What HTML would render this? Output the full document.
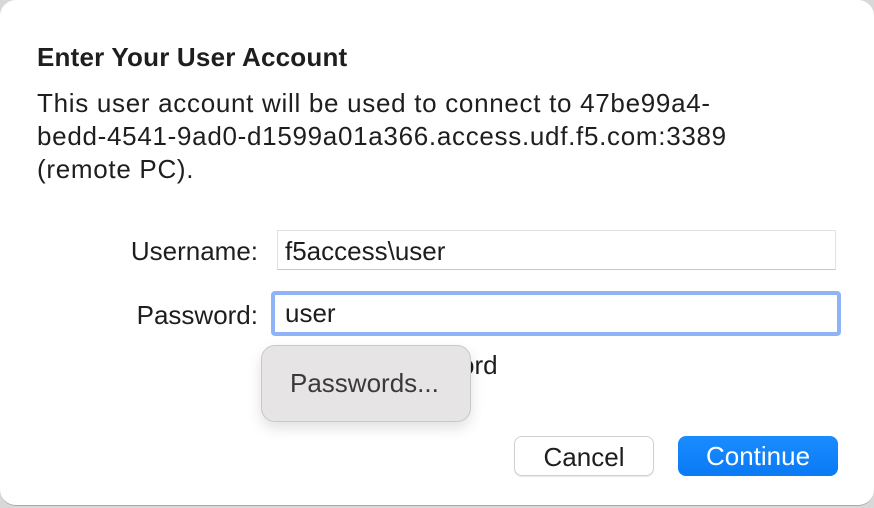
<!DOCTYPE html>
<html><head><style>
body{margin:0;width:874px;height:508px;background:#d8d8d8;position:relative;overflow:hidden;font-family:"Liberation Sans",sans-serif;color:#1e1e1e}
.dlg{position:absolute;left:0;top:0;width:874px;height:505px;background:#fff;border-radius:16px;border-bottom:1px solid #aaa}
.t{position:absolute;left:37px;top:41px;font-size:26px;font-weight:bold;letter-spacing:0.2px;line-height:32px}
.p{position:absolute;left:37px;top:87px;font-size:26px;line-height:33px;width:800px;letter-spacing:0.7px;white-space:nowrap}
.lbl{position:absolute;font-size:26px;text-align:right;width:200px;line-height:30px}
.f{position:absolute;background:#fff;font-size:26px;box-sizing:border-box;padding-left:7px}
.btn{position:absolute;top:436px;height:40px;border-radius:8px;font-size:26px;text-align:center;line-height:40px;box-sizing:border-box}
</style></head><body>
<div class="dlg">
<div class="t">Enter Your User Account</div>
<div class="p">This user account will be used to connect to 47be99a4-<br>bedd-4541-9ad0-d1599a01a366.access.udf.f5.com:3389<br>(remote PC).</div>
<div class="lbl" style="left:58px;top:236px">Username:</div>
<div class="f" style="left:277px;top:230px;width:559px;height:40px;border:1px solid #e2e2e2;border-bottom:1px solid #c8c8c8;line-height:40px">f5access\user</div>
<div class="lbl" style="left:58px;top:300px">Password:</div>
<div class="f" style="left:271px;top:291px;width:570px;height:45px;border:4px solid #8fb3f7;border-radius:4px;line-height:36px;padding-left:10px">user</div>
<div style="position:absolute;left:460px;top:350px;font-size:26px">ord</div>
<div style="position:absolute;left:261px;top:345px;width:210px;height:77px;box-sizing:border-box;background:#e6e4e4;border:1px solid #c8c8c8;border-radius:14px;box-shadow:0 6px 14px rgba(0,0,0,.12);font-size:26px;color:#3a3a3a;line-height:75px;padding-left:28px">Passwords...</div>
<div class="btn" style="left:514px;width:140px;background:#fff;border:1px solid #d0d0d0;box-shadow:0 1px 1px rgba(0,0,0,.1)">Cancel</div>
<div class="btn" style="left:678px;width:160px;background:linear-gradient(#1a8cff,#0a7af5);color:#fff">Continue</div>
</div>
</body></html>
